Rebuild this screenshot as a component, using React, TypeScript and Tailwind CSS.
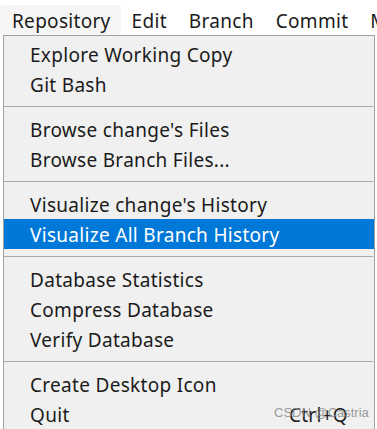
import React from "react";

type Entry = { label: string; shortcut?: string; active?: boolean } | "sep";

const entries: Entry[] = [
	{ label: "Explore Working Copy" },
	{ label: "Git Bash" },
	"sep",
	{ label: "Browse change's Files" },
	{ label: "Browse Branch Files..." },
	"sep",
	{ label: "Visualize change's History" },
	{ label: "Visualize All Branch History", active: true },
	"sep",
	{ label: "Database Statistics" },
	{ label: "Compress Database" },
	{ label: "Verify Database" },
	"sep",
	{ label: "Create Desktop Icon" },
	{ label: "Quit", shortcut: "Ctrl+Q" },
];

const App: React.FC = () => {
	return (
		<div className="w-[377px] h-[429px] overflow-hidden bg-white text-[#1b1b1b] font-['Noto_Sans',sans-serif] text-[19px] tracking-[0.3px] leading-none">
			{/* menu bar */}
			<div className="h-[35px] flex items-end whitespace-nowrap">
				<div className="h-[30px] pl-3 pr-[10px] pt-[2px] flex items-center bg-[#f5f5f5] rounded-t-[3px]">Repository</div>
				<div className="h-[30px] px-[11px] pt-[2px] flex items-center">Edit</div>
				<div className="h-[30px] px-[11px] pt-[2px] flex items-center">Branch</div>
				<div className="h-[30px] px-[11px] pt-[2px] flex items-center">Commit</div>
				<div className="h-[30px] px-[11px] pt-[2px] flex items-center">Merge</div>
			</div>

			{/* dropdown */}
			<div className="relative ml-[3px] w-[372px] h-[400px] bg-[#f0f0f0] border-t border-l border-r border-[#a0a0a0] pt-[3px]">
				{entries.map((e, i) =>
					e === "sep" ? (
						<div key={i} className="h-[15px] pt-[7px]">
							<div className="h-px mr-[1px] bg-[#a8a8a8]" />
						</div>
					) : (
						<div
							key={i}
							className={
								"h-[30px] pl-[26px] pr-[26px] pt-[2px] flex items-center justify-between whitespace-nowrap " +
								(e.active ? "bg-[#0078d7] text-white" : "")
							}
						>
							<span>{e.label}</span>
							{e.shortcut && <span>{e.shortcut}</span>}
						</div>
					)
				)}
				<div className="absolute left-[270px] top-[370px] text-[13px] tracking-normal text-[#8f8f8f]/90 font-['Liberation_Sans',sans-serif]">
					CSDN @Castria
				</div>
			</div>
		</div>
	);
};

export default App;
